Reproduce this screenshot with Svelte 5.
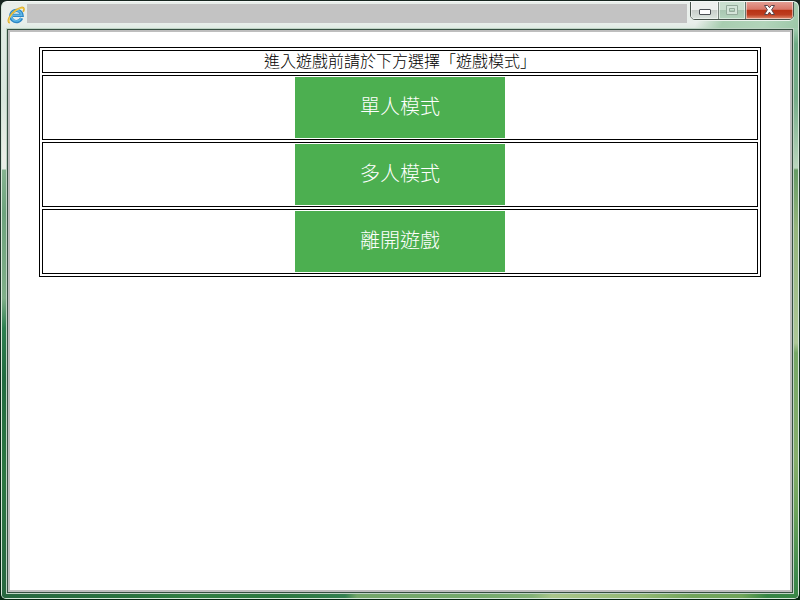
<script>
  const modes = ['單人模式', '多人模式', '離開遊戲'];
</script>

<div class="desktop">
  <div class="window">
    <header>
      <svg class="logo" width="18" height="18" viewBox="0 0 18 18">
        <path d="M14.6 12.2A5.6 5.6 0 1 1 15 9.4H6" fill="none" stroke="#2c86c4" stroke-width="3.4" />
        <path d="M14.2 12A5.3 5.3 0 1 1 14.7 9.3H6" fill="none" stroke="#5fb8e8" stroke-width="1.6" />
        <path d="M2.8 17C-.8 15.5 3 8.6 8 4.8C12.4 1.4 17.3 0 16.9 3.6C16.8 4.4 16.5 5.1 16.1 5.8" fill="none" stroke="#dfae2c" stroke-width="1.8" />
        <path d="M2.8 16.6C.2 15 3.8 8.7 8.3 5.2C12.2 2.1 16.5 1 16.4 3.3" fill="none" stroke="#f5d355" stroke-width="1" />
      </svg>
      <div class="title"></div>
      <div class="controls">
        <div class="control min">
          <svg width="14" height="8" viewBox="0 0 14 8"><rect x="1.5" y="1.5" width="11" height="5" rx=".5" fill="#fff" stroke="#4c5055" /></svg>
        </div>
        <div class="control max">
          <svg width="12" height="10" viewBox="0 0 12 10"><path d="M.5 .5H11.5V9.5H.5Z M3.5 3.5H8.5V6.5H3.5Z" fill="#d4e5d9" fill-rule="evenodd" stroke="#94aa9b" /></svg>
        </div>
        <div class="control close">
          <svg width="13" height="12" viewBox="0 0 13 12"><path d="M1.5 1.5H4.7L6.5 3.7L8.3 1.5H11.5L8.6 5.8L11.5 10.5H8.3L6.5 8.1L4.7 10.5H1.5L4.4 5.8Z" fill="#fff" stroke="#58464b" /></svg>
        </div>
      </div>
    </header>
    <div class="middle">
      <div class="side left"></div>
      <main>
        <section class="table">
          <div class="cell heading">進入遊戲前請於下方選擇「遊戲模式」</div>
          {#each modes as mode}
            <div class="cell"><button>{mode}</button></div>
          {/each}
        </section>
      </main>
      <div class="side right"></div>
    </div>
    <footer></footer>
  </div>
</div>

<style>
  :global(body) { margin: 0; overflow: hidden; }
  .desktop {
    width: 800px;
    height: 600px;
    box-sizing: border-box;
    padding: 1px;
    background: linear-gradient(#16251f, #26382f 30%, #0a2b18 70%, #052611);
  }
  .window {
    width: 798px;
    height: 598px;
    box-sizing: border-box;
    border: 1px solid #d5e6d9;
    border-top-color: #f4f8f6;
    border-radius: 6px 6px 5px 5px;
    overflow: hidden;
    display: flex;
    flex-direction: column;
    background:
      linear-gradient(115deg, transparent 0 638px, #a8cdb0 662px, #b2d4ba 700px, #9cc7a8 100%) 0 0 / 100% 28px no-repeat,
      linear-gradient(#e8eeea, #e9efeb 75%, #dce9e0) 0 0 / 100% 28px no-repeat,
      #39744c;
  }
  header {
    height: 26px;
    flex: none;
    display: flex;
  }
  .logo { flex: none; margin: 4px 0 0 5px; }
  .title { width: 660px; height: 19px; margin: 2px 0 0 2px; background: #c3c3c3; flex: none; }
  .controls {
    display: flex;
    flex: none;
    box-sizing: border-box;
    width: 104px;
    height: 20px;
    margin: -2px 0 0 3px;
    border: 1px solid #47534c;
    border-radius: 0 0 5px 5px;
    overflow: hidden;
    box-shadow: 0 1px 0 #edf4ef;
  }
  .control {
    box-sizing: border-box;
    display: flex;
    justify-content: center;
    box-shadow: inset 0 0 0 1px #ffffff80;
  }
  .min {
    width: 28px;
    padding-top: 7px;
    border-right: 1px solid #79847d;
    background: linear-gradient(#eef0ee 0 48%, #c8ceca 52%, #dce5df);
  }
  .max {
    width: 27px;
    padding-top: 4px;
    border-right: 1px solid #65746b;
    background: linear-gradient(#cadfcf 0 48%, #a9c7b2 52%, #b4d5bd);
  }
  .close {
    width: 47px;
    padding-top: 3px;
    background: linear-gradient(#e5a399 0, #d87768 46%, #b93214 52%, #bd3d20 76%, #e29072);
  }
  .middle { display: flex; flex: 1; min-height: 0; }
  .side { width: 4px; flex: none; }
  .left {
    background: linear-gradient(#e1ebe4 0, #d9e7dd 70px, #eceee7 130px, #e8eee6 141px, #86b391 142px, #6da37d 185px, #80ae89 270px, #2d8050 300px, #226b40 350px, #2c7742 450px, #286740 100%);
  }
  .right {
    background: linear-gradient(#a2cdb0 0, #6daa84 16px, #75ac88 70px, #b9d6bd 140px, #669b65 142px, #95b57c 200px, #adc797 315px, #76a766 325px, #87ae6c 430px, #6fa45c 480px, #3e8a4c 550px, #398747 100%);
  }
  main {
    flex: 1;
    box-sizing: border-box;
    border: 2px solid #bebebe;
    margin: 2px;
    outline: 1px solid #354f40;
    box-shadow: 0 0 0 2px #bfd4c5;
    background: #fff;
    padding: 15px 29px 0;
    position: relative;
  }
  footer {
    height: 4px;
    flex: none;
    background: linear-gradient(90deg, #286740, #2a743f 130px, #338044 190px, #2d7840 280px, #348150 343px, #74a66a 355px, #75aa6c 480px, #83b176 530px, #a9c58a 550px, #92b873 640px, #72a55b 690px, #70a45a 740px, #368544 765px, #398747);
  }
  .table {
    box-sizing: border-box;
    width: 722px;
    border: 1px solid #000;
    padding: 2px;
    display: flex;
    flex-direction: column;
    gap: 2px;
    font-family: "Noto Sans CJK TC", sans-serif;
    font-weight: 300;
  }
  .cell {
    box-sizing: border-box;
    height: 65px;
    border: 1px solid #000;
    padding: 1px;
    display: flex;
    justify-content: center;
  }
  .heading {
    height: 23px;
    align-items: flex-start;
    padding: 0;
    font-size: 16px;
    line-height: 18px;
    color: #000;
  }
  button {
    width: 210px;
    height: 61px;
    padding: 0 0 4px;
    border: 0;
    background: #4caf50;
    color: #fff;
    font: 300 20px/24px "Noto Sans CJK TC", sans-serif;
  }
</style>
